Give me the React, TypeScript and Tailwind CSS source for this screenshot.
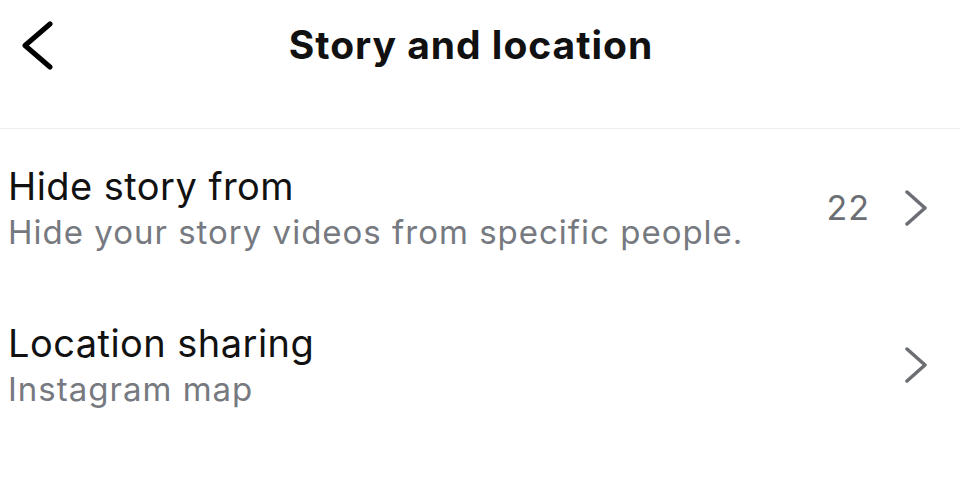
const ROWS = [
  { title: 'Hide story from', subtitle: 'Hide your story videos from specific people.', count: '22' },
  { title: 'Location sharing', subtitle: 'Instagram map', count: '' },
]

function Chevron({ className }: { className?: string }) {
  return (
    <svg viewBox="0 0 24 36" className={className} fill="none" stroke="currentColor" strokeWidth={3.5} strokeLinecap="round" strokeLinejoin="round">
      <polyline points="3,2 21,18 3,34" />
    </svg>
  )
}

function SettingRow({ title, subtitle, count }: { title: string; subtitle: string; count: string }) {
  return (
    <div className="flex items-center pl-2 pr-[32px] h-[157px]">
      <div className="flex-1 flex flex-col">
        <span className="text-[38px] leading-[48px] tracking-[0.012em] text-[#111111]">{title}</span>
        <span className="text-[33px] leading-[44px] tracking-[1px] text-[#767a80]">{subtitle}</span>
      </div>
      <div className="flex items-center gap-[34px]">
        {count && <span className="text-[34px] tracking-[1px] text-[#6b6e72]">{count}</span>}
        <Chevron className="w-[24px] h-[36px] text-[#6b6e72]" />
      </div>
    </div>
  )
}

export default function App() {
  return (
    <div className="w-[960px] h-[480px] bg-white overflow-hidden font-['Inter','Liberation_Sans',sans-serif]">
      <div className="h-[129px] border-b border-[#ededed]">
        <div className="relative h-[90px] flex items-center justify-center pr-[18px]">
          <svg
            viewBox="0 0 32 52"
            className="absolute left-[22px] top-[20px] w-[32px] h-[52px] text-black"
            fill="none"
            stroke="currentColor"
            strokeWidth={5}
            strokeLinecap="round"
            strokeLinejoin="round"
          >
            <polyline points="28,4 3,25.5 28,47" />
          </svg>
          <h1 className="text-[39px] font-bold tracking-[0.025em] text-[#111111]">Story and location</h1>
        </div>
      </div>
      <div>
        {ROWS.map((row) => (
          <SettingRow key={row.title} {...row} />
        ))}
      </div>
    </div>
  )
}
